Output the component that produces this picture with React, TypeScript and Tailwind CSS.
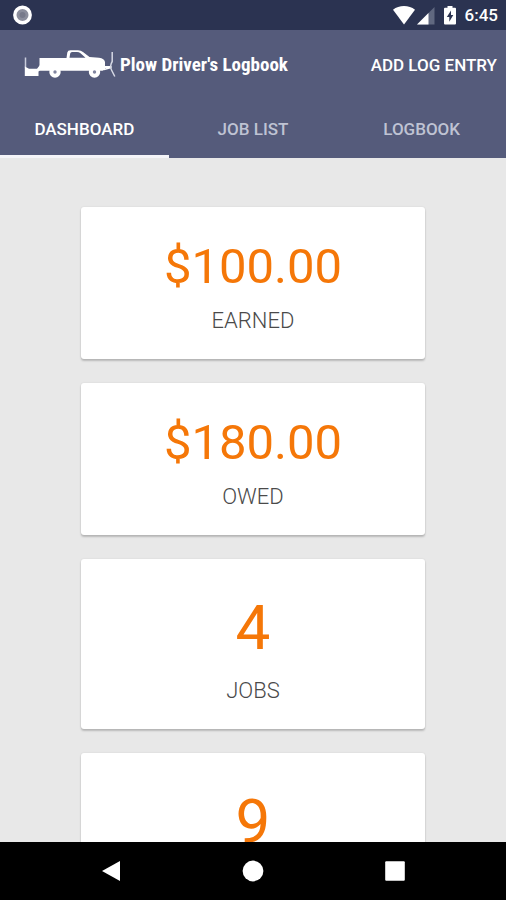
import { useState } from 'react';

interface Stat {
  value: string;
  label: string;
  large?: boolean;
}

const stats: Stat[] = [
  { value: '$100.00', label: 'EARNED' },
  { value: '$180.00', label: 'OWED' },
  { value: '4', label: 'JOBS', large: true },
  { value: '9', label: 'LOGS', large: true },
];

const tabs = ['DASHBOARD', 'JOB LIST', 'LOGBOOK'];

function StatusBar() {
  return (
    <div className="flex h-[30px] shrink-0 items-center justify-between bg-[#2b3351] pl-3 pr-2 text-white">
      <svg width="20" height="20" viewBox="0 0 20 20" aria-hidden="true">
        <circle cx="10.5" cy="10" r="7.7" fill="#8b8e9c" stroke="#fff" strokeWidth="3.4" />
        <circle cx="10.5" cy="10" r="3" fill="#777a8a" />
      </svg>
      <div className="flex items-center">
        <svg width="24" height="20" viewBox="0 0 24 20" aria-hidden="true">
          <path d="M11 19.5 0 4.8C3 2.2 7 1 11 1s8 1.2 11 3.8z" fill="#fff" />
        </svg>
        <svg className="mr-2" width="18" height="20" viewBox="0 0 18 20" aria-hidden="true">
          <path d="M17.5 2v17.5H0z" fill="#606880" />
          <path d="M11.5 8v11.5H0z" fill="#fff" />
        </svg>
        <svg className="mr-2" width="14" height="20" viewBox="0 0 14 20" aria-hidden="true">
          <path d="M4.5 1h5v1.8H12a1 1 0 0 1 1 1v14.7a1 1 0 0 1-1 1H2a1 1 0 0 1-1-1V3.8a1 1 0 0 1 1-1h2.5z" fill="#fff" />
          <path d="M8 5.5 3.8 12h2.5v4.8L10.3 10H8z" fill="#2b3351" />
        </svg>
        <span className="text-[17px] leading-6 font-medium">6:45</span>
      </div>
    </div>
  );
}

function PlowTruck() {
  return (
    <svg width="92" height="32" viewBox="0 0 92 32" fill="none" aria-hidden="true">
      {/* salt spreader */}
      <path d="M1.5 8.5v10" stroke="#c9cddd" strokeWidth="1.5" />
      <path d="M0.8 17.5 5 19.8H13L16 16V21.5L14.5 22.5V27H0.8z" fill="#fff" />
      {/* wheels */}
      <circle cx="31" cy="23" r="5.7" fill="#fff" />
      <circle cx="70.5" cy="23" r="5.7" fill="#fff" />
      {/* body and cab */}
      <path
        fillRule="evenodd"
        d="M15.5 9H42.5L43.3 3.5Q43.7 1.2 46.5 1.2H54Q57 1.2 59 3L65.5 8 75 8.8Q80.5 9.5 81 13V20.5L78.5 21.8H15.5zM45.5 8.7H61.5L56.5 4.3Q55 2.9 53 2.9H48Q46.5 2.9 46.2 4.5z"
        fill="#fff"
      />
      <circle cx="31" cy="23" r="1.7" fill="#8185a0" />
      <circle cx="70.5" cy="23" r="1.7" fill="#8185a0" />
      {/* plow blade */}
      <path d="M80 18H87.5M80 20.5 87 18.5" stroke="#fff" strokeWidth="1.8" />
      <path d="M88.2 3V12.5Q85.5 17 87.5 21L90.8 27.5" stroke="#d5d8e4" strokeWidth="1.5" />
    </svg>
  );
}

function StatCard({ value, label, large }: Stat) {
  return (
    <section className="shrink-0 rounded-[3px] bg-white pt-8 pb-6 text-center shadow-[0_2px_2px_rgba(0,0,0,0.2),0_0_2px_rgba(0,0,0,0.1)]">
      <p className={`text-[#f57708] ${large ? 'text-[62px] leading-[74px]' : 'text-[49px] leading-[56px]'}`}>
        {value}
      </p>
      <h2 className="mt-3 text-[22px] leading-7 font-light text-[#4a4a4a]">{label}</h2>
    </section>
  );
}

export default function App() {
  const [active, setActive] = useState('DASHBOARD');

  return (
    <div className="flex h-screen flex-col overflow-hidden bg-[#e8e8e8] font-['Roboto',sans-serif]">
      <StatusBar />

      <header className="shrink-0 bg-[#555b7b] text-white">
        <div className="flex h-[70px] items-center justify-between pl-6 pr-[9px]">
          <div className="flex items-center gap-1">
            <PlowTruck />
            <h1 className="whitespace-nowrap font-['Liberation_Sans_Narrow','Roboto_Condensed','Open_Sans_Condensed',sans-serif] text-[19px] leading-6 font-bold">
              Plow Driver's Logbook
            </h1>
          </div>
          <button className="whitespace-nowrap text-[17px] leading-6 font-medium">ADD LOG ENTRY</button>
        </div>
        <nav className="grid h-[58px] grid-cols-3">
          {tabs.map(tab => (
            <button
              key={tab}
              onClick={() => setActive(tab)}
              className={`border-b-3 pt-1 text-[17px] font-medium ${
                active === tab ? 'border-[#f4f4f8] text-white' : 'border-transparent text-[#bfc3d3]'
              }`}
            >
              {tab}
            </button>
          ))}
        </nav>
      </header>

      <main className="flex min-h-0 flex-1 flex-col gap-6 overflow-y-auto px-[16%] py-[49px] [scrollbar-width:none]">
        {stats.map(stat => (
          <StatCard key={stat.label} {...stat} />
        ))}
      </main>

      <footer className="flex h-[58px] shrink-0 items-center justify-around bg-black px-10">
        <button aria-label="Back">
          <svg width="22" height="22" viewBox="0 0 22 22">
            <path d="M20 1v20L2 11z" fill="#fff" />
          </svg>
        </button>
        <button aria-label="Home">
          <svg width="22" height="22" viewBox="0 0 22 22">
            <circle cx="11" cy="11" r="10.4" fill="#fff" />
          </svg>
        </button>
        <button aria-label="Recent apps">
          <svg width="22" height="22" viewBox="0 0 22 22">
            <rect x="1.2" y="1.2" width="19.6" height="19.6" rx="1" fill="#fff" />
          </svg>
        </button>
      </footer>
    </div>
  );
}
